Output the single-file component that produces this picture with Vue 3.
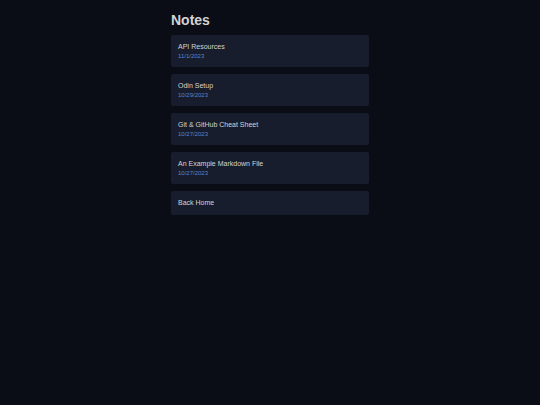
<script setup>
const notes = [
  { title: 'API Resources', date: '11/1/2023' },
  { title: 'Odin Setup', date: '10/29/2023' },
  { title: 'Git & GitHub Cheat Sheet', date: '10/27/2023' },
  { title: 'An Example Markdown File', date: '10/27/2023' },
]
</script>

<template>
  <main class="page">
    <h1 class="heading">Notes</h1>
    <nav class="list" aria-label="Notes">
      <a v-for="note in notes" :key="note.title" class="card" href="#">
        <span class="title">{{ note.title }}</span>
        <time class="date">{{ note.date }}</time>
      </a>
      <a class="card" href="#">
        <span class="title">Back Home</span>
      </a>
    </nav>
  </main>
</template>

<style>
body {
  margin: 0;
  background: #0a0d15;
}
</style>

<style scoped>
.page {
  box-sizing: border-box;
  max-width: 198px;
  margin: 0 auto;
  padding: 12px 0;
  color: #d4d4d4;
  font-family: "Liberation Sans", Arial, sans-serif;
}
.heading {
  margin: 0 0 6px;
  font-size: 14px;
  line-height: 17px;
  font-weight: 700;
}
.list {
  display: flex;
  flex-direction: column;
  gap: 7px;
}
.card {
  display: flex;
  flex-direction: column;
  padding: 7px;
  border-radius: 2px;
  background: #171d2c;
  color: inherit;
  text-decoration: none;
}
.title {
  font-size: 7px;
  line-height: 10px;
}
.date {
  color: #5584d8;
  font-size: 6px;
  line-height: 8px;
}
</style>
